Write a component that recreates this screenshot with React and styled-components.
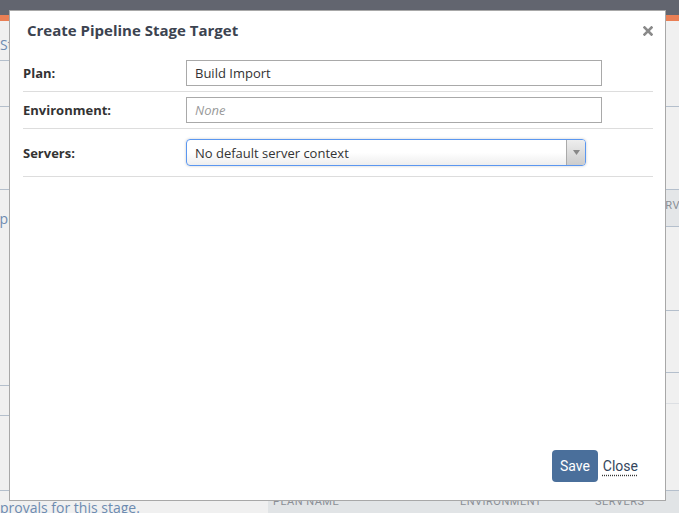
import React from "react";
import styled, { createGlobalStyle } from "styled-components";

const GlobalStyle = createGlobalStyle`
  html, body {
    margin: 0;
    padding: 0;
    background: #f0f0f0;
    overflow: hidden;
  }
  * {
    box-sizing: border-box;
  }
`;

const leftRows = [
  { h: 40, text: "Stages" },
  { h: 46 },
  { h: 83 },
  { h: 196, text: "Approvers", top: true, shift: 18 },
  { h: 30 },
  { h: 75 },
];

const rightRows = [
  { h: 86 },
  { h: 83 },
  { h: 37, header: true },
  { h: 84 },
  { h: 62 },
  { h: 31, light: true },
  { h: 87 },
];

const App = () => {
  return (
    <>
      <GlobalStyle />
      <Page>
        <TopBar />
        <Accent />
        <Body>
          <LeftColumn>
            {leftRows.map((r, i) => (
              <BgRow key={i} $h={r.h} $top={r.top}>
                {r.text && <BgText $shift={r.shift}>{r.text}</BgText>}
              </BgRow>
            ))}
            <Note>provals for this stage.</Note>
          </LeftColumn>
          <RightColumn>
            {rightRows.map((r, i) => (
              <BgRow key={i} $h={r.h} $header={r.header} $light={r.light}>
                {r.header && <HeadCell $end>SERVERS</HeadCell>}
              </BgRow>
            ))}
            <TableHead>
              <HeadCell $w={187}>PLAN NAME</HeadCell>
              <HeadCell $w={135}>ENVIRONMENT</HeadCell>
              <HeadCell>SERVERS</HeadCell>
            </TableHead>
          </RightColumn>
        </Body>

        <Modal>
          <ModalHeader>
            <Title>Create Pipeline Stage Target</Title>
            <CloseIcon aria-label="close">
              <svg width="10" height="10" viewBox="0 0 10 10">
                <path
                  d="M1.5 1.5 L8.5 8.5 M8.5 1.5 L1.5 8.5"
                  stroke="#8a8a8a"
                  strokeWidth="2.6"
                  strokeLinecap="square"
                />
              </svg>
            </CloseIcon>
          </ModalHeader>

          <Form>
            <FieldRow>
              <Label>Plan:</Label>
              <TextInput defaultValue="Build Import" />
            </FieldRow>
            <FieldRow>
              <Label>Environment:</Label>
              <TextInput placeholder="None" />
            </FieldRow>
            <FieldRow $pad={10}>
              <Label>Servers:</Label>
              <Select>
                <SelectText>No default server context</SelectText>
                <SelectArrow>
                  <svg width="7" height="5" viewBox="0 0 7 5">
                    <path d="M0 0 L7 0 L3.5 5 Z" fill="#888" />
                  </svg>
                </SelectArrow>
              </Select>
            </FieldRow>
          </Form>

          <Footer>
            <SaveButton>Save</SaveButton>
            <CloseLink>Close</CloseLink>
          </Footer>
        </Modal>
      </Page>
    </>
  );
};

export default App;

const Page = styled.div`
  position: relative;
  width: 679px;
  height: 513px;
  overflow: hidden;
  font-family: "Open Sans", "Liberation Sans", sans-serif;
`;

const TopBar = styled.div`
  height: 15px;
  background: #62656f;
`;

const Accent = styled.div`
  height: 6px;
  background: #e97f55;
`;

const Body = styled.div`
  display: grid;
  grid-template-columns: 268px 1fr;
`;

const LeftColumn = styled.div`
  display: flex;
  flex-direction: column;
  margin-left: -30px;
`;

const RightColumn = styled.div`
  display: flex;
  flex-direction: column;
`;

const BgRow = styled.div`
  height: ${(p) => p.$h}px;
  border-bottom: 1px solid ${(p) => (p.$light ? "#dcdfe3" : "#b4bfcc")};
  background: ${(p) => (p.$header ? "#e4e6e8" : "transparent")};
  display: flex;
  align-items: ${(p) =>
    p.$header ? "center" : p.$top ? "flex-start" : "flex-end"};
  justify-content: ${(p) => (p.$header ? "flex-end" : "flex-start")};
  padding: ${(p) => (p.$top ? "19px 0 0 30px" : "0 0 6px 30px")};
`;

const BgText = styled.span`
  font-size: 14px;
  color: #6d8bb0;
  margin-left: ${(p) => (p.$shift ? `-${p.$shift}px` : "0")};
`;

const Note = styled.div`
  padding: 7px 0 0 30px;
  font-size: 14px;
  color: #6d8bb0;
  white-space: nowrap;
`;

const TableHead = styled.div`
  display: flex;
  background: #e1e4e6;
  height: 30px;
  padding: 4px 0 0 5px;
`;

const HeadCell = styled.span`
  width: ${(p) => (p.$w ? `${p.$w}px` : "auto")};
  font-family: "Roboto", "Liberation Sans", sans-serif;
  font-size: 11px;
  letter-spacing: 0.5px;
  color: #8a8f96;
  margin-right: ${(p) => (p.$end ? "-22px" : "0")};
`;

const Modal = styled.div`
  position: absolute;
  top: 10px;
  left: 9px;
  width: 657px;
  height: 491px;
  background: #ffffff;
  border: 1px solid #a8a8a8;
  display: flex;
  flex-direction: column;
`;

const ModalHeader = styled.div`
  display: flex;
  align-items: flex-start;
  justify-content: space-between;
  padding: 9px 12px 0 17px;
  height: 44px;
`;

const Title = styled.h3`
  margin: 0;
  font-size: 15px;
  line-height: 20px;
  font-weight: 700;
  color: #3c4350;
`;

const CloseIcon = styled.span`
  display: flex;
  margin-top: 6px;
`;

const Form = styled.div`
  padding: 0 12px 0 13px;
  display: flex;
  flex-direction: column;
`;

const FieldRow = styled.div`
  display: flex;
  align-items: center;
  padding: ${(p) => p.$pad || 5}px 0;
  border-bottom: 1px solid #dddddd;
`;

const Label = styled.label`
  width: 163px;
  font-size: 13px;
  font-weight: 700;
  color: #333333;
`;

const TextInput = styled.input`
  width: 416px;
  height: 26px;
  border: 1px solid #a9a9a9;
  border-radius: 0;
  padding: 0 8px;
  font-family: "Open Sans", "Liberation Sans", sans-serif;
  font-size: 13px;
  color: #333;
  outline: none;

  &::placeholder {
    font-style: italic;
    color: #9a9a9a;
  }
`;

const Select = styled.div`
  width: 400px;
  height: 27px;
  display: flex;
  align-items: stretch;
  border: 1px solid #5b97f0;
  border-radius: 4px;
  background: linear-gradient(to bottom, #ffffff 50%, #eeeeee 100%);
  box-shadow: 0 0 3px rgba(0, 0, 0, 0.2);
  overflow: hidden;
`;

const SelectText = styled.span`
  flex: 1;
  display: flex;
  align-items: center;
  padding-left: 8px;
  font-size: 13px;
  color: #333;
`;

const SelectArrow = styled.span`
  width: 19px;
  display: flex;
  align-items: center;
  justify-content: center;
  border-left: 1px solid #aaaaaa;
  background: linear-gradient(to bottom, #eeeeee 0%, #cccccc 100%);
`;

const Footer = styled.div`
  margin-top: auto;
  display: flex;
  align-items: center;
  justify-content: flex-end;
  gap: 5px;
  padding: 0 27px 18px 0;
`;

const SaveButton = styled.button`
  height: 32px;
  padding: 0 8px;
  border: none;
  border-radius: 4px;
  background: #4a6f9b;
  color: #ffffff;
  font-family: "Roboto", "Liberation Sans", sans-serif;
  font-size: 14px;
  cursor: pointer;
`;

const CloseLink = styled.a`
  font-family: "Roboto", "Liberation Sans", sans-serif;
  font-size: 14px;
  color: #34465c;
  text-decoration: underline dotted #333;
  text-underline-offset: 4px;
  cursor: pointer;
`;
